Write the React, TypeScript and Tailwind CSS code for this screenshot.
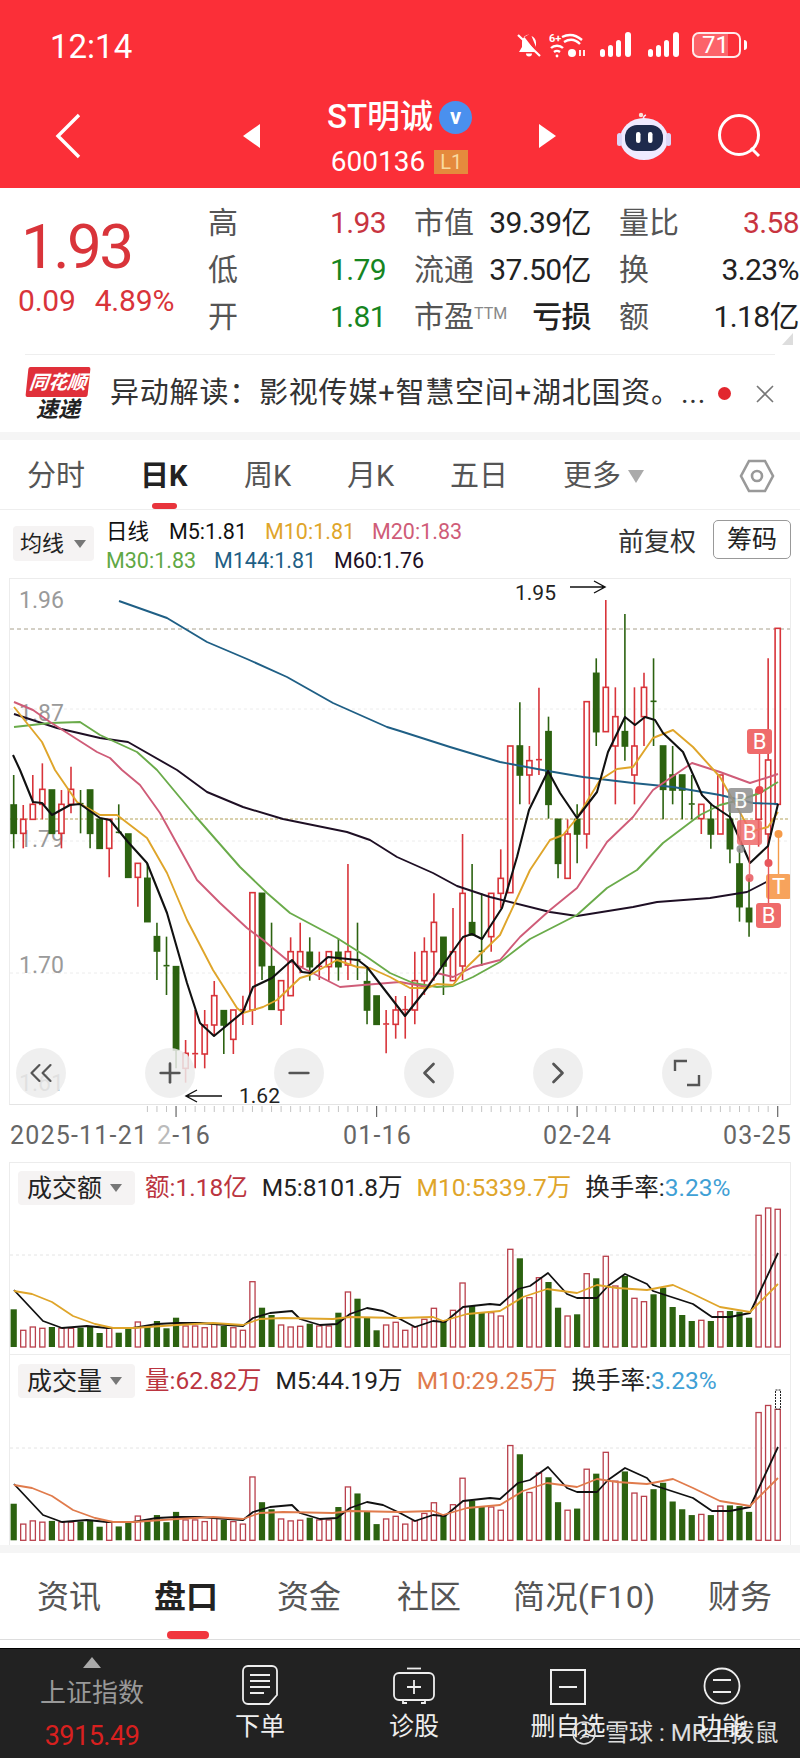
import { ChevronLeft, ChevronRight, ChevronsLeft, Minus, Plus } from "lucide-react";

type Candle = { x: number; high: number; top: number; bottom: number; low: number; up: boolean };

// rows read off the picture in 3x crops: [high, top, bottom, low, up]
type Row = [number, number, number, number, number];

const left: Row[] = [
  [15, 105, 190, 235, 0], [105, 148, 190, 235, 1], [15, 103, 148, 148, 1], [-20, 58, 103, 148, 1],
  [60, 60, 190, 190, 0], [60, 103, 190, 235, 1], [-10, 58, 103, 130, 1], [60, 101, 103, 190, 0],
  [60, 60, 190, 235, 0], [148, 148, 235, 235, 0], [148, 148, 235, 322, 1], [103, 187, 189, 190, 0],
  [192, 192, 322, 322, 0], [280, 280, 322, 410, 1], [280, 325, 455, 455, 0], [458, 500, 543, 630, 0],
  [500, 587, 589, 675, 0], [590, 590, 840, 895, 0], [810, 850, 895, 938, 1], [720, 851, 853, 895, 1],
  [720, 765, 852, 895, 1], [633, 677, 765, 795, 1], [722, 722, 765, 852, 0], [720, 720, 808, 852, 1],
  [677, 719, 721, 765, 1], [368, 368, 720, 765, 1], [370, 370, 587, 630, 0], [458, 590, 718, 718, 0],
  [632, 632, 720, 765, 1], [502, 545, 677, 677, 1], [458, 545, 590, 610, 1], [502, 547, 590, 632, 0],
  [545, 589, 591, 630, 1], [545, 545, 590, 632, 1], [505, 547, 590, 632, 0],
];
// crop at x340 y780
const middle: Row[] = [
  [252, 515, 555, 600, 1], [428, 539, 541, 600, 0], [560, 605, 690, 733, 0], [648, 648, 733, 733, 0],
  [690, 732, 734, 820, 1], [648, 690, 733, 776, 1], [648, 689, 691, 776, 1], [515, 602, 690, 733, 1],
  [472, 515, 602, 645, 1], [340, 427, 515, 602, 1], [472, 472, 558, 645, 0], [384, 515, 602, 602, 1],
  [162, 340, 558, 600, 1], [252, 428, 465, 465, 0], [340, 514, 516, 558, 0], [340, 340, 470, 515, 1],
  [208, 295, 340, 385, 1],
];
// crop at x400 y560
const right: Row[] = [
  [558, 558, 998, 998, 1], [427, 558, 645, 733, 0], [558, 602, 645, 733, 1], [383, 599, 601, 645, 1],
  [470, 515, 733, 776, 0], [778, 778, 910, 955, 0], [778, 822, 955, 955, 1], [733, 778, 822, 910, 0],
  [425, 425, 822, 866, 1], [295, 340, 515, 558, 0], [120, 382, 515, 515, 1], [382, 470, 558, 733, 1],
  [162, 515, 558, 602, 0], [382, 558, 645, 733, 1], [338, 382, 470, 558, 1], [295, 424, 426, 558, 0],
  [558, 558, 688, 778, 0], [558, 645, 690, 733, 0], [645, 645, 690, 778, 0], [645, 732, 734, 778, 0],
  [733, 733, 776, 822, 1], [733, 778, 822, 866, 0], [645, 645, 822, 822, 1], [733, 778, 866, 910, 0],
  [866, 912, 1040, 1085, 0], [955, 1045, 1085, 1130, 0], [690, 690, 778, 860, 1], [295, 600, 822, 910, 1],
  [205, 205, 733, 733, 1],
];

const rows: [Row[], number][] = [[left, 770], [middle, 780], [right, 560]];
const candles: Candle[] = rows
  .flatMap(([list, base]) =>
    list.map((r) => ({
      high: base + r[0] / 3,
      top: base + r[1] / 3,
      bottom: base + r[2] / 3,
      low: base + r[3] / 3,
      up: r[4] === 1,
    }))
  )
  .map((c, i) => ({ ...c, x: 13.7 + 9.55 * i }));

const barHeights = [
  37.7, 16.7, 20, 18.7, 20, 18.7, 18.7, 19.3, 21, 14, 19.3, 14.3, 18.7, 25, 21, 26, 18.7, 29.3, 21, 21, 19.3, 23.3, 21,
  19.3, 16.7, 65.3, 39.3, 32, 22, 20, 20.7, 23.3, 21, 21, 34.3, 55, 48.3, 29.3, 16.7, 22, 24.7, 16.7, 20, 27.7, 38.7,
  26, 36.7, 64, 41, 35, 34.3, 31, 97.7, 88.7, 49.3, 69.3, 65, 39.3, 31, 32.7, 73.3, 68.7, 90.7, 61, 71, 48.7, 45.3,
  52.7, 59.3, 40, 32, 26, 26.7, 26, 35.3, 36, 35.3, 29.3, 131.7, 139, 137.7,
];

const m144 = "119,601 167,618 187,630 207,642 247,659 287,677 333,703 387,727 400,731 450,747 500,762 548,771 583,777 633,783 673,787 720,795 753,803 778,804";
const m60 = "14,714 57,728 100,738 128,742 177,770 207,792 243,807 283,819 347,832 370,840 397,857 433,873 457,886 490,897 550,912 577,916 633,907 657,902 710,898 747,892 778,876";
const m30 = "14,727 50,723 80,722 100,735 137,752 157,770 197,818 240,867 267,893 290,913 337,938 367,957 390,973 413,983 437,987 453,986 473,977 500,962 530,939 577,915 607,888 637,870 663,843 700,815 720,805 740,800 760,793 778,782";
const m20 = "14,702 33,710 50,722 97,752 110,758 122,770 140,785 160,813 197,880 220,903 247,928 263,940 287,960 340,987 363,985 400,982 427,987 437,973 453,977 473,967 500,960 520,937 550,910 577,888 607,842 633,817 653,790 692,763 720,772 750,783 778,774";
const m10 = "14,707 42,742 55,770 77,802 100,815 117,815 147,838 167,873 187,920 213,970 237,1008 243,1013 263,1007 277,1000 300,978 310,975 337,960 357,967 370,968 390,977 410,988 427,988 437,984 453,985 467,967 500,935 530,870 550,840 563,835 577,818 600,780 617,769 633,767 653,738 673,730 693,747 720,777 747,825 753,831 768,827 778,812";
const m5 = "13,755 20,770 33,802 42,803 52,815 70,805 80,804 100,818 110,820 128,842 147,863 167,913 187,983 200,1023 214,1036 243,1012 253,987 272,978 292,960 302,972 310,973 328,957 358,960 367,967 405,1016 427,988 443,965 463,937 472,934 482,939 502,908 517,857 529,810 548,771 560,793 577,818 597,792 608,752 625,717 635,725 645,717 655,720 663,733 683,752 702,795 712,805 730,817 750,863 768,846 778,804";

const volBlack = "14,1289 43,1320 62,1327 87,1325 107,1327 133,1327 157,1323 177,1322 200,1322 213,1323 243,1325 253,1317 270,1312 292,1310 300,1318 320,1324 337,1323 350,1313 367,1307 383,1310 400,1318 415,1326 433,1320 445,1321 463,1306 490,1303 500,1304 518,1288 530,1285 548,1272 567,1293 577,1297 597,1297 608,1285 625,1273 647,1283 653,1290 693,1303 712,1316 730,1316 750,1312 778,1252";
const volAvg = "14,1290 32,1293 52,1301 73,1315 95,1323 113,1327 133,1327 177,1324 213,1322 243,1324 260,1318 283,1317 333,1318 350,1316 400,1317 433,1316 443,1320 467,1313 500,1310 523,1296 547,1288 577,1292 597,1284 617,1287 647,1289 673,1284 693,1293 720,1306 750,1311 778,1283";

const RED = "#d8343a";
const GREEN = "#2c6210";

function PriceChart() {
  return (
    <svg viewBox="10 579 780 526" className="block h-[526px] w-[780px]">
      <g stroke="#ececec" strokeDasharray="3 3" strokeWidth="1">
        <line x1="10" x2="790" y1="709" y2="709" />
        <line x1="10" x2="790" y1="841" y2="841" />
        <line x1="10" x2="790" y1="973" y2="973" />
      </g>
      <line x1="10" x2="790" y1="629" y2="629" stroke="#a8a08c" strokeDasharray="4 3" />
      <line x1="10" x2="790" y1="819" y2="819" stroke="#b3a25a" strokeDasharray="3 2" />
      <g fill="#9a9a9a" fontSize="23">
        <text x="19" y="608">1.96</text>
        <text x="19" y="721">1.87</text>
        <text x="19" y="847">1.79</text>
        <text x="19" y="973">1.70</text>
        <text x="19" y="1091">1.61</text>
      </g>
      {candles.map((c) => {
        const color = c.up ? RED : GREEN;
        const doji = c.bottom - c.top < 2;
        return (
          <g key={c.x} stroke={color}>
            <line x1={c.x} x2={c.x} y1={c.high} y2={c.top} strokeWidth="1.6" />
            <line x1={c.x} x2={c.x} y1={c.bottom} y2={c.low} strokeWidth="1.6" />
            {doji ? (
              <line x1={c.x - 3} x2={c.x + 3} y1={c.top} y2={c.top} strokeWidth="1.6" />
            ) : (
              <rect
                x={c.x - 2.6}
                y={c.top}
                width="5.2"
                height={c.bottom - c.top}
                fill={c.up ? "#fff" : color}
                strokeWidth="1.6"
              />
            )}
          </g>
        );
      })}
      <g fill="none" strokeWidth="1.9" strokeLinejoin="round">
        <polyline points={m144} stroke="#1f5f85" />
        <polyline points={m60} stroke="#1e0f24" />
        <polyline points={m30} stroke="#6aab4a" />
        <polyline points={m20} stroke="#cf5c78" />
        <polyline points={m10} stroke="#dfa52a" />
        <polyline points={m5} stroke="#111" strokeWidth="2.1" />
      </g>
      <text x="515" y="600" fontSize="21" fill="#222">1.95</text>
      <path d="M570 587H605M594 581l11 6-11 6" fill="none" stroke="#111" strokeWidth="1.4" />
      <text x="239" y="1103" fontSize="21" fill="#222">1.62</text>
      <path d="M222 1096H186M197 1090l-11 6 11 6" fill="none" stroke="#111" strokeWidth="1.4" />
      <Marker x={747} y={729} label="B" color="#ef6b6b" stemTo={790} dot="#e8454c" />
      <Marker x={728} y={788} label="B" color="#8f8f8f" stemTo={849} dot="#8f8f8f" opacity={0.85} />
      <Marker x={737} y={820} label="B" color="#ef6b6b" stemTo={878} dot="#e8565c" opacity={0.85} />
      <Marker x={766} y={874} label="T" color="#f7a35c" stemTo={834} dot="#f59a48" />
      <Marker x={756} y={903} label="B" color="#ef6b6b" stemTo={863} dot="#e8565c" />
    </svg>
  );
}

function Marker(props: { x: number; y: number; label: string; color: string; stemTo: number; dot: string; opacity?: number }) {
  const cx = props.x + 12.5;
  return (
    <g opacity={props.opacity ?? 1}>
      <line x1={cx} x2={cx} y1={props.y + 13} y2={props.stemTo} stroke={props.dot} strokeWidth="1.4" />
      <circle cx={cx} cy={props.stemTo} r="4" fill={props.dot} />
      <rect x={props.x} y={props.y} width="25" height="25" rx="3" fill={props.color} />
      <text x={cx} y={props.y + 20} textAnchor="middle" fontSize="22" fill="#fff">{props.label}</text>
    </g>
  );
}

function RoundButton({ x, children }: { x: number; children: React.ReactNode }) {
  return (
    <div
      className="absolute top-[469px] flex h-[50px] w-[50px] items-center justify-center rounded-full bg-[#ececec]/85 text-[#555]"
      style={{ left: x - 25 - 10 }}
    >
      {children}
    </div>
  );
}

function AxisTicks() {
  const ticks = Array.from({ length: 81 }, (_, i) => i);
  const major = [17, 38, 59, 80];
  return (
    <svg viewBox="0 1105 800 12" className="block h-[12px] w-[800px]">
      {ticks.map((i) => {
        const x = 13.7 + 9.55 * i;
        return major.includes(i) ? (
          <line key={i} x1={x} x2={x} y1="1106" y2="1117" stroke="#666" strokeWidth="1.2" />
        ) : (
          <line key={i} x1={x} x2={x} y1="1106" y2="1112" stroke={i < 14 ? "#fff" : "#c4c4c4"} strokeWidth="1" />
        );
      })}
    </svg>
  );
}

function VolumeBars({ panel }: { panel: 1 | 2 }) {
  const base = panel === 1 ? 1346 : 1539.3;
  const avg = panel === 1 ? "#dfa52a" : "#e07b4c";
  const shift = panel === 1 ? 0 : 194;
  const top = panel === 1 ? 1162 : 1354;
  return (
    <svg viewBox={`10 ${top} 780 192`} className="absolute left-0 top-0 h-[192px] w-[780px]">
      <line x1="10" x2="790" y1={panel === 1 ? 1254 : 1447} y2={panel === 1 ? 1254 : 1447} stroke="#e4e4e4" strokeDasharray="3 3" />
      {barHeights.map((h, i) => {
        const x = 13.7 + 9.55 * i;
        const height = panel === 1 ? h : i === 80 ? 131 : h * 0.97;
        return candles[i].up ? (
          <rect key={i} x={x - 2.6} y={base - height} width="5.2" height={height} fill="#fff" stroke="#b9404c" strokeWidth="1.3" />
        ) : (
          <rect key={i} x={x - 3.1} y={base - height} width="6.2" height={height} fill={GREEN} />
        );
      })}
      {panel === 2 && <rect x="775.5" y="1389" width="5" height="19" fill="#fff" stroke="#222" strokeDasharray="2 1" />}
      <g fill="none" strokeLinejoin="round" transform={`translate(0 ${shift})`}>
        <polyline points={volBlack} stroke="#111" strokeWidth="1.8" />
        <polyline points={volAvg} stroke={avg} strokeWidth="1.8" />
      </g>
    </svg>
  );
}

function Panel(props: {
  panel: 1 | 2;
  title: string;
  value: string;
  m5: string;
  m10: string;
  m10Color: string;
  height: string;
  top: string;
}) {
  return (
    <div className={`relative ml-[9px] w-[782px] border border-b-0 border-[#ececec] ${props.height}`}>
      <VolumeBars panel={props.panel} />
      <div className={`relative flex items-center gap-[14px] pl-[8px] text-[24.5px] leading-none ${props.top}`}>
        <div className="mr-[-4px] flex h-[34px] w-[117px] items-center rounded bg-[#f5f3f3] pl-[9px] text-[25px] text-[#222]">
          {props.title}
          <span className="ml-[8px] h-0 w-0 border-x-[6.5px] border-t-[8px] border-x-transparent border-t-[#777]" />
        </div>
        <span className="text-[#bb3540]">{props.value}</span>
        <span className="text-[#222]">{props.m5}</span>
        <span className={props.m10Color}>{props.m10}</span>
        <span className="text-[#222]">
          换手率:<span className="text-[#3fa0d5]">3.23%</span>
        </span>
      </div>
    </div>
  );
}

function StatCell(props: { label: React.ReactNode; value: string; color: string }) {
  return (
    <div className="flex h-[47px] items-center justify-between">
      <span className="text-[30px] leading-none text-[#555]">{props.label}</span>
      <span className={`text-[30px] leading-none tracking-[-0.6px] ${props.color}`}>{props.value}</span>
    </div>
  );
}

function StatusIcons() {
  return (
    <div className="flex items-center">
      <svg width="24" height="24" viewBox="0 0 24 24" fill="#fff">
        <path d="M12 1c-1 0-1.6.6-1.7 1.5C7 3.3 5 6 5 9.5V14l-3 5h17L7 3.5M19 14V9.5c0-3-2-5.5-4.5-6.5" />
        <path d="M9 20.5a3 3 0 0 0 6 0z" />
        <path d="M1 2l22 21" stroke="#fff" strokeWidth="2.2" />
      </svg>
      <svg width="38" height="26" viewBox="0 0 38 26" className="ml-[8px]" fill="none" stroke="#fff" strokeWidth="2.4">
        <text x="0" y="10" fontSize="11" fill="#fff" stroke="none" fontWeight="700">6+</text>
        <path d="M13 5c6-3 13-3 20 3M15 10c5-3 11-3 16 2" />
        <path d="M2 16c3-3 9-3 12 0M5 20c2-1.5 4-1.5 6 0" />
        <circle cx="8" cy="24" r="1.4" fill="#fff" stroke="none" />
        <circle cx="23" cy="21" r="4" fill="#fff" stroke="none" />
        <path d="M31 24v-6M35 24v-6" strokeWidth="1.8" />
      </svg>
      {[0, 1].map((n) => (
        <svg key={n} width="34" height="26" viewBox="0 0 34 26" fill="#fff" className={n === 0 ? "ml-[13px]" : "ml-[14px]"}>
          <rect x="0" y="17" width="5" height="8" rx="2.5" />
          <rect x="8" y="13" width="5" height="12" rx="2.5" />
          <rect x="16" y="8" width="5" height="17" rx="2.5" />
          <rect x="25" y="0" width="6" height="25" rx="3" />
        </svg>
      ))}
      <div className="relative ml-[10px] flex h-[26px] w-[49px] items-center overflow-hidden rounded-[7px] border-2 border-white/90">
        <div className="h-full w-[34px] bg-white/25" />
        <span className="absolute left-[8px] top-0 text-[24px] leading-[23px] text-white">71</span>
      </div>
      <div className="ml-[3px] h-[10px] w-[3px] rounded-r bg-white" />
    </div>
  );
}

function RobotIcon() {
  return (
    <svg width="54" height="48" viewBox="0 0 54 48">
      <path d="M27 10c-1-3-1-6 2-7" fill="none" stroke="#f2e9ff" strokeWidth="1.5" />
      <circle cx="24" cy="3" r="2.2" fill="#fbe3d8" />
      <ellipse cx="27" cy="27" rx="24" ry="21" fill="#efeaff" />
      <rect x="0" y="21" width="5" height="13" rx="2.5" fill="#dcd6f7" />
      <rect x="49" y="21" width="5" height="13" rx="2.5" fill="#dcd6f7" />
      <rect x="8" y="13" width="38" height="26" rx="12" fill="#1e2a4c" />
      <rect x="19" y="20" width="4.5" height="11" rx="2.2" fill="#fff" />
      <rect x="31" y="20" width="4.5" height="11" rx="2.2" fill="#fff" />
    </svg>
  );
}

function BottomIcon({ kind }: { kind: string }) {
  if (kind === "order") {
    return (
      <svg width="36" height="40" viewBox="0 0 36 40" fill="none" stroke="#eee" strokeWidth="1.8">
        <path d="M6 1h24a5 5 0 0 1 5 5v24l-8 9H6a5 5 0 0 1-5-5V6a5 5 0 0 1 5-5z" />
        <path d="M8 10h20M8 16h20M8 22h20M8 28h14" />
      </svg>
    );
  }
  if (kind === "diag") {
    return (
      <svg width="42" height="38" viewBox="0 0 42 38" fill="none" stroke="#eee" strokeWidth="1.8">
        <path d="M14 1.5h14" />
        <rect x="1" y="6" width="40" height="27" rx="5" />
        <path d="M21 13v14M14 20h14M10 33v3h4M32 33v3h-4" />
      </svg>
    );
  }
  if (kind === "remove") {
    return (
      <svg width="36" height="36" viewBox="0 0 36 36" fill="none" stroke="#eee" strokeWidth="2">
        <rect x="1" y="1" width="34" height="34" />
        <path d="M9 18h18" />
      </svg>
    );
  }
  return (
    <svg width="38" height="38" viewBox="0 0 38 38" fill="none" stroke="#eee" strokeWidth="1.8">
      <circle cx="19" cy="19" r="17.5" />
      <path d="M10 13h18M10 25h18" />
    </svg>
  );
}

export default function App() {
  const bottomTabs = [
    { label: "资讯", width: "w-[117px]" },
    { label: "盘口", width: "w-[123px]", active: true },
    { label: "资金", width: "w-[120px]" },
    { label: "社区", width: "w-[116px]" },
    { label: "简况(F10)", width: "w-[195px] tracking-[0.4px]" },
    { label: "财务", width: "" },
  ];
  const bottomBar = [
    { kind: "order", label: "下单" },
    { kind: "diag", label: "诊股" },
    { kind: "remove", label: "删自选" },
    { kind: "func", label: "功能" },
  ];

  return (
    <div className="relative h-[1758px] w-[800px] overflow-hidden bg-white font-['Roboto','Noto_Sans_CJK_SC',sans-serif]">
      {/* header */}
      <div className="h-[188px] bg-[#fb2f38] text-white">
        <div className="flex h-[96px] items-start justify-between pl-[50px] pr-[53px] pt-[32px]">
          <span className="text-[33px] leading-[30px]">12:14</span>
          <StatusIcons />
        </div>
        <div className="flex items-center pl-[55px]">
          <svg width="26" height="46" viewBox="0 0 26 46" fill="none" stroke="#fff" strokeWidth="3.4">
            <path d="M24 2L3 23l21 21" />
          </svg>
          <div className="ml-[162px] h-0 w-0 border-y-[12px] border-r-[17px] border-y-transparent border-r-white" />
          <div className="flex w-[279px] flex-col items-center pt-[3px]">
            <div className="flex items-center">
              <span className="text-[33px] font-medium leading-[36px]">ST明诚</span>
              <span className="ml-[6px] flex h-[33px] w-[33px] items-center justify-center rounded-full bg-[#4a90ee] text-[22px] font-bold leading-none">
                v
              </span>
            </div>
            <div className="mt-[14px] flex items-center">
              <span className="text-[28px] leading-[26px]">600136</span>
              <span className="ml-[9px] flex h-[24px] w-[34px] items-center justify-center bg-[#e58a3d] text-[20px] leading-none text-[#f9d9a0]">
                L1
              </span>
            </div>
          </div>
          <div className="h-0 w-0 border-y-[12px] border-l-[17px] border-y-transparent border-l-white" />
          <div className="ml-[61px]">
            <RobotIcon />
          </div>
          <svg width="44" height="44" viewBox="0 0 44 44" fill="none" stroke="#fff" strokeWidth="3" className="ml-[47px]">
            <circle cx="21" cy="21" r="19.5" />
            <path d="M33 34l8 8" />
          </svg>
        </div>
      </div>

      {/* quote */}
      <div className="relative flex h-[166px]">
        <div className="w-[208px] pl-[18px] text-[#d9343a]">
          <div className="pl-[3px] pt-[29px] text-[62px] font-normal leading-[60px] tracking-[-2.6px]">1.93</div>
          <div className="mt-[10px] flex gap-[19px] text-[30px] leading-[28px] tracking-[-0.2px]">
            <span>0.09</span>
            <span>4.89%</span>
          </div>
        </div>
        <div className="grid grid-cols-[178px_177px_180px] content-start gap-x-[28px] pt-[11px]">
          <StatCell label="高" value="1.93" color="text-[#c8343f]" />
          <StatCell label="市值" value="39.39亿" color="text-[#222]" />
          <StatCell label="量比" value="3.58" color="text-[#c8343f]" />
          <StatCell label="低" value="1.79" color="text-[#16851f]" />
          <StatCell label="流通" value="37.50亿" color="text-[#222]" />
          <StatCell label="换" value="3.23%" color="text-[#222]" />
          <StatCell label="开" value="1.81" color="text-[#16851f]" />
          <StatCell
            label={
              <>
                市盈<span className="align-[8px] text-[16px] text-[#888]">TTM</span>
              </>
            }
            value="亏损"
            color="text-[#222] font-medium"
          />
          <StatCell label="额" value="1.18亿" color="text-[#222]" />
        </div>
        <div className="absolute right-[7px] top-[145px] h-0 w-0 border-b-[12px] border-l-[11px] border-b-[#ddd] border-l-transparent" />
      </div>

      {/* news strip */}
      <div className="mx-[25px] h-px bg-[#eee]" />
      <div className="flex h-[77px] items-center pl-[27px]">
        <div className="flex w-[62px] flex-col items-center">
          <div className="flex h-[30px] w-[62px] -skew-x-6 items-center justify-center rounded-[2px] bg-[#e0303a] text-[19px] font-bold italic leading-none text-white">
            同花顺
          </div>
          <div className="mt-[2px] text-[22px] font-bold italic leading-[22px] text-[#222]">速递</div>
        </div>
        <span className="ml-[21px] w-[608px] shrink-0 whitespace-nowrap text-[29px] leading-none tracking-[0.8px] text-[#333]">
          {"异动解读\uFF1A影视传媒+智慧空间+湖北国资。..."}
        </span>
        <span className="h-[13px] w-[13px] shrink-0 rounded-full bg-[#e2262e]" />
        <svg width="18" height="18" viewBox="0 0 18 18" stroke="#777" strokeWidth="1.6" className="ml-[25px] shrink-0">
          <path d="M1 1l16 16M17 1L1 17" />
        </svg>
      </div>
      <div className="h-[8px] bg-[#f5f5f5]" />

      {/* period tabs */}
      <div className="relative flex h-[70px] items-center border-b border-[#eee] pl-[27px] pt-[3px] text-[29px] leading-none text-[#555]">
        <span className="w-[113px]">分时</span>
        <span className="w-[104px] font-bold text-[#222]">日K</span>
        <span className="w-[103px]">周K</span>
        <span className="w-[103px]">月K</span>
        <span className="w-[113px]">五日</span>
        <span>更多</span>
        <span className="ml-[7px] h-0 w-0 border-x-[8px] border-t-[13px] border-x-transparent border-t-[#aaa]" />
        <svg width="36" height="34" viewBox="0 0 36 34" fill="none" stroke="#999" strokeWidth="2.6" className="ml-[95px]">
          <path d="M10 2h16l8 15-8 15H10L2 17z" />
          <circle cx="18" cy="17" r="5" />
        </svg>
        <div className="absolute bottom-0 left-[152px] h-[6px] w-[25px] rounded-full bg-[#e8343c]" />
      </div>

      {/* moving averages */}
      <div className="flex h-[68px] items-start pl-[13px]">
        <div className="mt-[16px] flex h-[35px] w-[81px] items-center rounded bg-[#f5f3f3] pl-[7px] text-[22px] leading-none text-[#222]">
          均线
          <span className="ml-[10px] h-0 w-0 border-x-[6.5px] border-t-[8px] border-x-transparent border-t-[#777]" />
        </div>
        <div className="ml-[12px] flex w-[512px] flex-col gap-[7px] pt-[11px] text-[21.5px] leading-[22px]">
          <div className="flex">
            <span className="w-[63px] text-[#111]">日线</span>
            <span className="w-[96px] text-[#111]">M5:1.81</span>
            <span className="w-[107px] text-[#dfa52a]">M10:1.81</span>
            <span className="text-[#cf5c78]">M20:1.83</span>
          </div>
          <div className="flex">
            <span className="w-[108px] text-[#5fa845]">M30:1.83</span>
            <span className="w-[120px] text-[#1f5f85]">M144:1.81</span>
            <span className="text-[#1e0f24]">M60:1.76</span>
          </div>
        </div>
        <span className="mt-[19px] text-[26px] leading-[26px] text-[#333]">前复权</span>
        <div className="ml-[17px] mt-[10px] flex h-[39px] w-[78px] items-center justify-center rounded-[5px] border border-[#999] text-[25px] leading-none text-[#222]">
          筹码
        </div>
      </div>

      {/* price chart */}
      <div className="relative ml-[9px] h-[527px] w-[782px] border border-b-[#e4e4e4] border-[#ececec]">
        <PriceChart />
        <RoundButton x={41}>
          <ChevronsLeft size={38} strokeWidth={1.4} />
        </RoundButton>
        <RoundButton x={170}>
          <Plus size={32} strokeWidth={2} />
        </RoundButton>
        <RoundButton x={299}>
          <Minus size={32} strokeWidth={2} />
        </RoundButton>
        <RoundButton x={429}>
          <ChevronLeft size={36} strokeWidth={1.8} />
        </RoundButton>
        <RoundButton x={558}>
          <ChevronRight size={36} strokeWidth={1.8} />
        </RoundButton>
        <RoundButton x={687}>
          <svg width="28" height="28" viewBox="0 0 28 28" fill="none" stroke="#555" strokeWidth="2.4">
            <path d="M2 12V2h12M26 16v10H14" />
          </svg>
        </RoundButton>
      </div>

      {/* date axis */}
      <div className="h-[57px]">
        <AxisTicks />
        <div className="flex pl-[10px] pt-[6px] text-[25px] leading-[26px] tracking-[1.2px] text-[#666]">
          <span className="w-[147px] whitespace-nowrap">2025-11-21</span>
          <span className="w-[186px]">
            <span className="text-[#bbb]">2</span>-16
          </span>
          <span className="w-[200px]">01-16</span>
          <span className="w-[180px]">02-24</span>
          <span>03-25</span>
        </div>
      </div>

      <Panel
        panel={1}
        height="h-[192px]"
        top="pt-[8px]"
        title="成交额"
        value="额:1.18亿"
        m5="M5:8101.8万"
        m10="M10:5339.7万"
        m10Color="text-[#dfa52a]"
      />
      <Panel
        panel={2}
        height="h-[191px]"
        top="pt-[9px]"
        title="成交量"
        value="量:62.82万"
        m5="M5:44.19万"
        m10="M10:29.25万"
        m10Color="text-[#e07b4c]"
      />
      <div className="h-[8px] bg-[#f5f5f5]" />

      {/* bottom tabs */}
      <div className="flex h-[87px] border-b border-[#ddd] pl-[37px] pt-[28px] text-[32px] leading-[32px] text-[#555]">
        {bottomTabs.map((t) => (
          <div key={t.label} className={`relative ${t.width} ${t.active ? "font-bold text-[#222]" : ""}`}>
            {t.label}
            {t.active && <div className="absolute left-[13px] top-[50px] h-[8px] w-[42px] rounded-full bg-[#f0363e]" />}
          </div>
        ))}
      </div>
      <div className="h-[8px]" />

      {/* bottom bar */}
      <div className="relative grid h-[110px] grid-cols-[184px_152px_156px_152px_156px] border-t border-t-black bg-[#222]">
        <div className="flex flex-col items-center pt-[8px]">
          <span className="h-0 w-0 border-x-[9px] border-b-[11px] border-x-transparent border-b-[#aaa]" />
          <span className="mt-[11px] text-[26px] leading-[28px] text-[#999]">上证指数</span>
          <span className="mt-[14px] text-[27px] leading-[30px] tracking-[-0.5px] text-[#d8201f]">3915.49</span>
        </div>
        {bottomBar.map((b) => (
          <div key={b.label} className="flex flex-col items-center">
            <div className="flex h-[56px] items-end">
              <BottomIcon kind={b.kind} />
            </div>
            <span className="mt-[9px] text-[25px] leading-[26px] text-[#eee]">{b.label}</span>
          </div>
        ))}
        <div className="absolute left-[571px] top-[70px] flex items-center text-[24px] leading-[28px] text-white/85">
          <svg width="26" height="26" viewBox="0 0 26 26" fill="none" stroke="#ddd" strokeWidth="1.6">
            <circle cx="13" cy="13" r="11" />
            <path d="M7 15c3-6 9-6 12-2M9 19c3-3 6-3 9-2" />
          </svg>
          <span className="ml-[8px] whitespace-pre">雪球 : MR土拨鼠</span>
        </div>
      </div>
    </div>
  );
}
